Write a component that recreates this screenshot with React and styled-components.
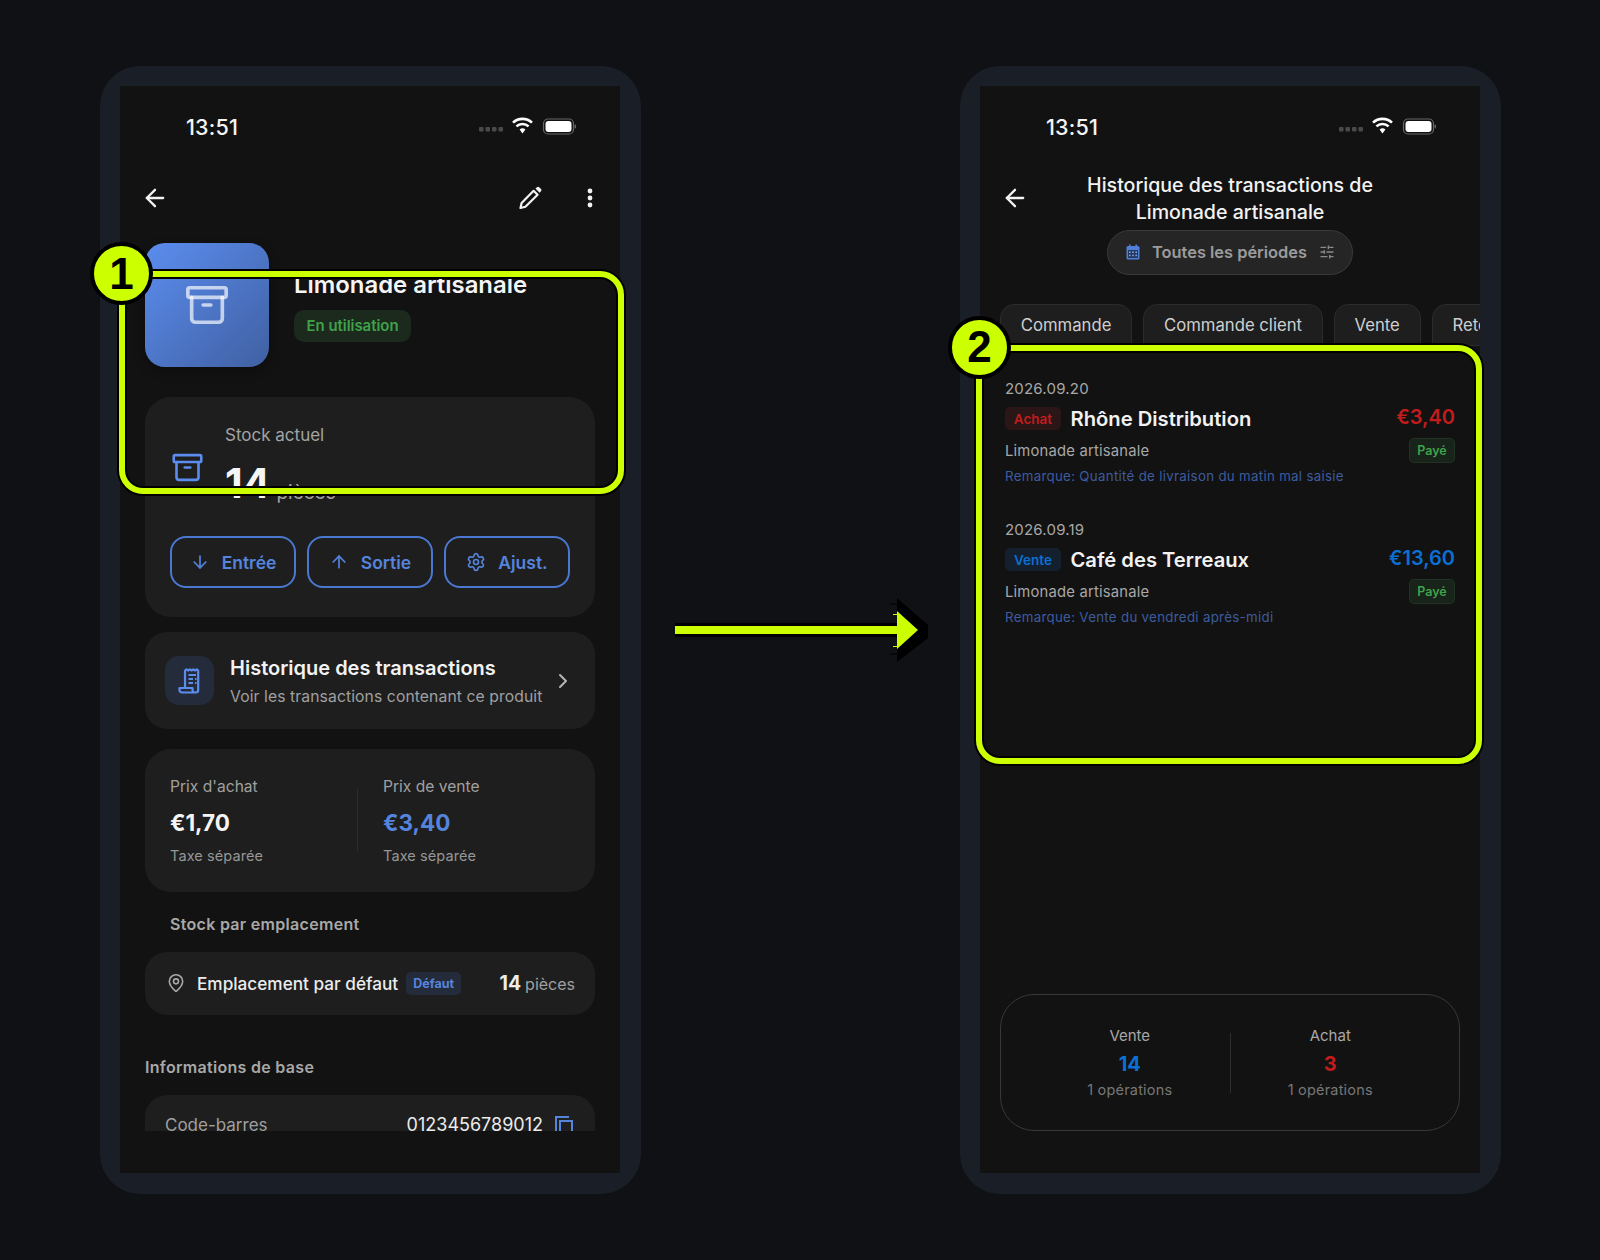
import React from "react";
import styled, { createGlobalStyle } from "styled-components";
import { ArrowLeft, ArrowDown, ArrowUp, Archive, Settings, ChevronRight, MapPin, SlidersHorizontal } from "lucide-react";

const Global = createGlobalStyle`
  html, body { margin: 0; padding: 0; background: #0f1115; }
  * { box-sizing: border-box; }
  body { font-family: Inter, "Noto Sans", sans-serif; -webkit-font-smoothing: antialiased; }
`;

const Page = styled.div`
  position: relative;
  width: 1600px;
  height: 1260px;
  overflow: hidden;
  padding: 66px 99px 66px 100px;
  display: flex;
  justify-content: space-between;
  background: #0f1115;
`;
const Frame = styled.div`
  width: 541px;
  height: 1128px;
  padding: 20px 21px 21px 20px;
  border-radius: 40px;
  background: #1a1e27;
`;
const Screen = styled.div`
  height: 1087px;
  background: #121212;
  display: flex;
  flex-direction: column;
  overflow: hidden;
  color: #f2f2f2;
`;
const StatusBar = styled.div`
  height: 80px;
  flex: none;
  display: flex;
  align-items: center;
  padding: 0 44px 0 66px;
`;
const Time = styled.div`
  padding-top: 1px;
  font-size: 21.5px;
  font-weight: 500;
  letter-spacing: 0.2px;
  color: #f4f4f4;
  flex: 1;
`;
const StatusIcons = styled.svg`
  width: 97px;
  height: 24px;
  display: block;
`;
const NavBar = styled.div`
  height: 64px;
  flex: none;
  display: flex;
  align-items: center;
  padding: 0 26px 0 21px;
  gap: 43px;
`;
const NavSpacer = styled.div`flex: 1;`;
const Scroll = styled.div`
  height: 901px;
  flex: none;
  overflow: hidden;
  padding: 13px 25px 0;
`;
const Hero = styled.div`
  display: flex;
  gap: 25px;
`;
const ProductImage = styled.div`
  width: 124px;
  height: 124px;
  border-radius: 20px;
  background: linear-gradient(135deg, #5b8def 0%, #4060a2 100%);
  display: flex;
  align-items: center;
  justify-content: center;
  color: rgba(255, 255, 255, 0.68);
  box-shadow: 0 4px 12px rgba(0, 0, 0, 0.3);
`;
const HeroText = styled.div`
  padding-top: 27px;
  display: flex;
  flex-direction: column;
  align-items: flex-start;
  gap: 11px;
`;
const ProductName = styled.div`
  font-size: 23.9px;
  line-height: 29px;
  font-weight: 600;
  color: #f5f5f5;
`;
const StateBadge = styled.div`
  height: 32px;
  padding: 0 12.5px;
  display: flex;
  align-items: center;
  border-radius: 10px;
  background: #1c2a1e;
  color: #3fa34a;
  font-size: 14.9px;
  font-weight: 600;
`;
const Card = styled.div`
  background: #1e1e1e;
  border-radius: ${(p) => p.$radius || 26}px;
  margin-top: ${(p) => p.$top || 0}px;
`;
const StockCard = styled(Card)`
  padding: 26px 25px 29px;
`;
const StockRow = styled.div`
  display: flex;
  align-items: center;
  gap: 21px;
`;
const BoxIcon = styled.div`
  width: 34px;
  padding-top: 5px;
  color: #5b8def;
  display: flex;
  justify-content: center;
`;
const StockLabel = styled.div`
  font-size: 17px;
  line-height: 24px;
  color: #a3a3a3;
`;
const StockValue = styled.div`
  margin-top: 12px;
  height: 48px;
  line-height: 48px;
  white-space: nowrap;
`;
const BigNumber = styled.span`
  font-size: 41px;
  font-weight: 700;
  color: #f5f5f5;
`;
const Unit = styled.span`
  margin-left: 6px;
  font-size: 19px;
  vertical-align: -1px;
  color: #a3a3a3;
`;
const Actions = styled.div`
  margin-top: 29px;
  display: flex;
  gap: 11px;
`;
const ActionButton = styled.div`
  flex: 1;
  height: 52px;
  border: 2px solid #4a78d0;
  border-radius: 16px;
  display: flex;
  align-items: center;
  justify-content: center;
  gap: 12px;
  color: #5584dd;
  font-size: 17.5px;
  font-weight: 600;
`;
const HistoryCard = styled(Card)`
  height: 97px;
  padding: 0 20px;
  display: flex;
  align-items: center;
  gap: 16px;
`;
const HistoryIcon = styled.div`
  width: 49px;
  height: 49px;
  flex: none;
  border-radius: 14px;
  background: #242b3a;
  display: flex;
  align-items: center;
  justify-content: center;
`;
const HistoryText = styled.div`
  flex: 1;
`;
const HistoryTitle = styled.div`
  font-size: 20px;
  line-height: 28px;
  font-weight: 600;
  color: #f2f2f2;
`;
const HistorySub = styled.div`
  font-size: 15.7px;
  line-height: 22px;
  margin-top: 4px;
  letter-spacing: 0.1px;
  color: #a0a0a0;
  white-space: nowrap;
`;
const Chevron = styled.div`
  color: #b5b5b5;
  display: flex;
  margin: 1px 0 0 -10px;
`;
const PriceCard = styled(Card)`
  height: 143px;
  padding: 26px 25px 0;
  display: flex;
`;
const PriceCol = styled.div`
  flex: 1;
`;
const PriceDivider = styled.div`
  width: 1px;
  height: 62px;
  margin: 14px 25px 0 0;
  background: #2d2d2d;
`;
const PriceLabel = styled.div`
  font-size: 15.6px;
  line-height: 24px;
  color: #a0a0a0;
`;
const PriceValue = styled.div`
  margin-top: 9px;
  font-size: 22.5px;
  line-height: 30px;
  font-weight: 700;
  color: ${(p) => p.$color || "#f5f5f5"};
`;
const PriceNote = styled.div`
  margin-top: 7px;
  font-size: 14.5px;
  line-height: 22px;
  letter-spacing: 0.1px;
  color: #969696;
`;
const SectionTitle = styled.div`
  margin-top: ${(p) => p.$top}px;
  padding-left: ${(p) => p.$indent || 0}px;
  font-size: 16px;
  line-height: 24px;
  font-weight: 600;
  letter-spacing: 0.3px;
  color: #a8a8a8;
`;
const LocationCard = styled(Card)`
  height: 63px;
  padding: 0 20px 1px 21px;
  display: flex;
  align-items: center;
`;
const Pin = styled.div`
  color: #a8a8a8;
  display: flex;
  margin-right: 11px;
`;
const LocationName = styled.div`
  font-size: 17.2px;
  font-weight: 500;
  color: #ececec;
  white-space: nowrap;
`;
const DefaultBadge = styled.div`
  margin-left: 8px;
  height: 23px;
  padding: 0 7px;
  display: flex;
  align-items: center;
  border-radius: 5px;
  background: #242b3a;
  color: #5584dd;
  font-size: 12.5px;
  font-weight: 700;
`;
const LocationQty = styled.div`
  margin-left: auto;
  display: flex;
  align-items: baseline;
  gap: 4px;
`;
const QtyNumber = styled.span`
  font-size: 19.5px;
  font-weight: 700;
  color: #ececec;
`;
const QtyUnit = styled.span`
  font-size: 16px;
  color: #a0a0a0;
`;
const InfoCard = styled(Card)`
  height: 60px;
  padding: 18px 22px 0 20px;
  display: flex;
  align-items: flex-start;
  justify-content: space-between;
`;
const InfoLabel = styled.div`
  font-size: 17px;
  line-height: 24px;
  color: #a0a0a0;
`;
const InfoValue = styled.div`
  display: flex;
  align-items: center;
  gap: 12px;
  font-size: 18px;
  line-height: 24px;
  color: #ececec;
`;

const DetailNav = styled.div`
  flex: none;
  height: 64px;
  display: grid;
  grid-template-columns: 60px 1fr 60px;
  align-items: center;
`;
const BackSlot = styled.div`
  padding-left: 21px;
  display: flex;
`;
const DetailTitle = styled.div`
  padding-top: 2px;
  font-size: 19.6px;
  line-height: 27.5px;
  font-weight: 500;
  text-align: center;
  color: #f2f2f2;
`;
const FilterPill = styled.div`
  flex: none;
  align-self: center;
  height: 45px;
  padding: 0 17px 1px 18px;
  display: flex;
  align-items: center;
  gap: 12px;
  border: 1px solid #3a3a3a;
  border-radius: 23px;
  background: #252525;
  color: #9c9c9c;
  font-size: 16.4px;
  font-weight: 600;
`;
const Tabs = styled.div`
  flex: none;
  margin-top: 29px;
  padding-left: 20px;
  display: flex;
  gap: 11px;
  overflow: hidden;
`;
const Tab = styled.div`
  flex: none;
  height: 42px;
  padding: 0 19.8px 1px;
  display: flex;
  align-items: center;
  border: 1px solid #2b2b2b;
  border-radius: 14px 14px 0 0;
  background: #1e1e1e;
  color: #cfcfcf;
  font-size: 16.7px;
`;
const TxList = styled.div`
  flex: none;
  margin-top: 33px;
  padding: 0 25px;
  display: flex;
  flex-direction: column;
  gap: 33px;
`;
const Tx = styled.div`
  height: 108px;
`;
const TxDate = styled.div`
  font-size: 15px;
  line-height: 20px;
  letter-spacing: 0.2px;
  color: #a8a8a8;
`;
const TxTop = styled.div`
  margin-top: 8px;
  height: 23px;
  display: flex;
  align-items: center;
  justify-content: space-between;
`;
const TxParty = styled.div`
  display: flex;
  align-items: center;
  gap: 9.5px;
`;
const TypeBadge = styled.div`
  width: 56px;
  height: 23px;
  display: flex;
  align-items: center;
  justify-content: center;
  border-radius: 5px;
  background: ${(p) => p.$bg};
  color: ${(p) => p.$color};
  font-size: 13.5px;
  font-weight: 600;
`;
const TxName = styled.div`
  font-size: 20.2px;
  font-weight: 600;
  color: #f2f2f2;
`;
const TxAmount = styled.div`
  font-size: 20px;
  font-weight: 600;
  margin-top: -4px;
  color: ${(p) => p.$color};
`;
const TxMiddle = styled.div`
  margin-top: 8px;
  height: 24px;
  display: flex;
  align-items: center;
  justify-content: space-between;
`;
const TxProduct = styled.div`
  padding-top: 2px;
  font-size: 14.8px;
  letter-spacing: 0.2px;
  color: #a8a8a8;
`;
const PaidBadge = styled.div`
  height: 25px;
  width: 46px;
  display: flex;
  align-items: center;
  justify-content: center;
  border: 1px solid #223325;
  border-radius: 5px;
  background: #18231a;
  color: #3fa34a;
  font-size: 12.5px;
  font-weight: 600;
`;
const TxNote = styled.div`
  margin-top: 4px;
  font-size: 13.3px;
  line-height: 20px;
  letter-spacing: 0.3px;
  color: #3d5c9f;
`;
const Totals = styled.div`
  flex: none;
  margin: auto 20px 42px;
  padding: 0 29px;
  height: 137px;
  border: 1px solid #383838;
  border-radius: 34px;
  display: flex;
  align-items: center;
`;
const TotalCol = styled.div`
  flex: 1;
  text-align: center;
`;
const TotalDivider = styled.div`
  width: 1px;
  height: 60px;
  background: #2e2e2e;
`;
const TotalLabel = styled.div`
  font-size: 15px;
  line-height: 22px;
  color: #a8a8a8;
`;
const TotalValue = styled.div`
  margin-top: 4px;
  font-size: 20px;
  line-height: 26px;
  font-weight: 700;
  color: ${(p) => p.$color};
`;
const TotalNote = styled.div`
  margin-top: 2px;
  font-size: 14.5px;
  line-height: 22px;
  letter-spacing: 0.2px;
  color: #777;
`;

const Highlight = styled.div`
  position: absolute;
  left: ${(p) => p.$x}px;
  top: ${(p) => p.$y}px;
  width: ${(p) => p.$w}px;
  height: ${(p) => p.$h}px;
  border: 6px solid #ccff00;
  border-radius: 24px;
  box-shadow: 0 0 0 2px #000, inset 0 0 0 2px #000;
  pointer-events: none;
`;
const StepDot = styled.div`
  position: absolute;
  left: ${(p) => p.$x}px;
  top: ${(p) => p.$y}px;
  width: 63px;
  height: 63px;
  border-radius: 50%;
  border: 4px solid #000;
  background: #ccff00;
  color: #000;
  display: flex;
  align-items: center;
  justify-content: center;
  font-family: "Liberation Sans", Arial, sans-serif;
  font-size: 44px;
  font-weight: 700;
`;
const FlowArrow = styled.svg`
  position: absolute;
  left: 670px;
  top: 590px;
  width: 265px;
  height: 80px;
`;

const StatusGlyphs = () => (
  <StatusIcons viewBox="0 0 97 24">
    <g fill="#4a4a4a">
      <rect x="0" y="13" width="4.5" height="4.5" rx="1" />
      <rect x="6.5" y="13" width="4.5" height="4.5" rx="1" />
      <rect x="13" y="13" width="4.5" height="4.5" rx="1" />
      <rect x="19.5" y="13" width="4.5" height="4.5" rx="1" />
    </g>
    <g fill="none" stroke="#fff" strokeWidth="2.6">
      <path d="M34 8.6a14 14 0 0 1 19 0" />
      <path d="M37.4 12.4a9 9 0 0 1 12.2 0" />
    </g>
    <path d="M40.6 15.6a4.4 4.4 0 0 1 5.8 0L43.5 19.4z" fill="#fff" />
    <rect x="64.5" y="5" width="30" height="15" rx="4.5" fill="none" stroke="#666" strokeWidth="1.2" />
    <rect x="66.5" y="7" width="26" height="11" rx="3" fill="#fff" />
    <rect x="95.6" y="10.5" width="1.4" height="4" rx="0.7" fill="#666" />
  </StatusIcons>
);

const PencilIcon = () => (
  <svg width="26" height="26" viewBox="0 0 26 26" fill="none">
    <path d="M3.5 23 L4.6 18 L16.6 5.8 L20.6 9.8 L8.4 21.8 Z" stroke="#f2f2f2" strokeWidth="2.2" strokeLinejoin="round" />
    <path d="M18.4 3.6 L20 2.2 a1.6 1.6 0 0 1 2.2 0 L24 4 a1.6 1.6 0 0 1 0 2.2 L22.6 7.8 Z" fill="#f2f2f2" />
  </svg>
);

const MoreIcon = () => (
  <svg width="8" height="24" viewBox="0 0 8 24">
    <circle cx="4" cy="5" r="2.4" fill="#f2f2f2" />
    <circle cx="4" cy="12" r="2.4" fill="#f2f2f2" />
    <circle cx="4" cy="19" r="2.4" fill="#f2f2f2" />
  </svg>
);

const ReceiptIcon = () => (
  <svg width="26" height="28" viewBox="0 0 26 28" fill="none" stroke="#5b8def" strokeWidth="2.2">
    <path d="M8 21 V3.5 l1.5-1.2 1.7 1.2 1.7-1.2 1.7 1.2 1.7-1.2 1.7 1.2 1.7-1.2 1.5 1.2 V23 a2.5 2.5 0 0 1-2.5 2.5 H5 A2.5 2.5 0 0 1 2.5 23 V21 H15.5 V23 a2.5 2.5 0 0 0 2.5 2.5" strokeLinejoin="round" />
    <path d="M11.5 8 H19 M11.5 12 H16 M18 12 H19.5 M11.5 16 H16 M18 16 H19.5" />
  </svg>
);

const CopyIcon = () => (
  <svg width="18" height="18" viewBox="0 0 18 18" fill="none" stroke="#5584dd" strokeWidth="2" style={{ display: "block" }}>
    <path d="M1 17 V1 H14" />
    <rect x="5" y="5" width="12" height="14" />
  </svg>
);

const CalendarIcon = () => (
  <svg width="14" height="16" viewBox="0 0 14 16">
    <rect x="0.5" y="2" width="13" height="13.5" rx="1.6" fill="#4f7fd8" />
    <rect x="3" y="0.5" width="1.6" height="3" fill="#4f7fd8" />
    <rect x="9.4" y="0.5" width="1.6" height="3" fill="#4f7fd8" />
    <rect x="2" y="6" width="10" height="8" fill="#26375c" />
    <g fill="#7ea4ee">
      <rect x="3" y="7.4" width="1.6" height="1.6" />
      <rect x="6.2" y="7.4" width="1.6" height="1.6" />
      <rect x="9.4" y="7.4" width="1.6" height="1.6" />
      <rect x="3" y="10.6" width="1.6" height="1.6" />
      <rect x="6.2" y="10.6" width="1.6" height="1.6" />
      <rect x="9.4" y="10.6" width="1.6" height="1.6" />
    </g>
  </svg>
);

const ProductScreen = () => (
  <Screen>
    <StatusBar>
      <Time>13:51</Time>
      <StatusGlyphs />
    </StatusBar>
    <NavBar>
      <ArrowLeft size={28} strokeWidth={2} color="#f2f2f2" />
      <NavSpacer />
      <PencilIcon />
      <MoreIcon />
    </NavBar>
    <Scroll>
      <Hero>
        <ProductImage>
          <Archive size={46} strokeWidth={1.9} />
        </ProductImage>
        <HeroText>
          <ProductName>Limonade artisanale</ProductName>
          <StateBadge>En utilisation</StateBadge>
        </HeroText>
      </Hero>
      <StockCard $top={30}>
        <StockRow>
          <BoxIcon>
            <Archive size={33} strokeWidth={1.9} />
          </BoxIcon>
          <div>
            <StockLabel>Stock actuel</StockLabel>
            <StockValue>
              <BigNumber>14</BigNumber>
              <Unit>pièces</Unit>
            </StockValue>
          </div>
        </StockRow>
        <Actions>
          <ActionButton><ArrowDown size={20} />Entrée</ActionButton>
          <ActionButton><ArrowUp size={20} />Sortie</ActionButton>
          <ActionButton><Settings size={20} />Ajust.</ActionButton>
        </Actions>
      </StockCard>
      <HistoryCard $top={15} $radius={22}>
        <HistoryIcon><ReceiptIcon /></HistoryIcon>
        <HistoryText>
          <HistoryTitle>Historique des transactions</HistoryTitle>
          <HistorySub>Voir les transactions contenant ce produit</HistorySub>
        </HistoryText>
        <Chevron><ChevronRight size={24} /></Chevron>
      </HistoryCard>
      <PriceCard $top={20}>
        <PriceCol>
          <PriceLabel>Prix d'achat</PriceLabel>
          <PriceValue>€1,70</PriceValue>
          <PriceNote>Taxe séparée</PriceNote>
        </PriceCol>
        <PriceDivider />
        <PriceCol>
          <PriceLabel>Prix de vente</PriceLabel>
          <PriceValue $color="#5584dd">€3,40</PriceValue>
          <PriceNote>Taxe séparée</PriceNote>
        </PriceCol>
      </PriceCard>
      <SectionTitle $top={20} $indent={25}>Stock par emplacement</SectionTitle>
      <LocationCard $top={16} $radius={22}>
        <Pin><MapPin size={20} strokeWidth={1.9} /></Pin>
        <LocationName>Emplacement par défaut</LocationName>
        <DefaultBadge>Défaut</DefaultBadge>
        <LocationQty>
          <QtyNumber>14</QtyNumber>
          <QtyUnit>pièces</QtyUnit>
        </LocationQty>
      </LocationCard>
      <SectionTitle $top={40}>Informations de base</SectionTitle>
      <InfoCard $top={16} $radius={22}>
        <InfoLabel>Code-barres</InfoLabel>
        <InfoValue>0123456789012<CopyIcon /></InfoValue>
      </InfoCard>
    </Scroll>
  </Screen>
);

const transactions = [
  {
    date: "2026.09.20", type: "Achat", badgeBg: "#2a1616", color: "#c21c1c", name: "Rhône Distribution",
    amount: "€3,40", note: "Remarque: Quantité de livraison du matin mal saisie",
  },
  {
    date: "2026.09.19", type: "Vente", badgeBg: "#14202e", color: "#0b6fd4", name: "Café des Terreaux",
    amount: "€13,60", note: "Remarque: Vente du vendredi après-midi",
  },
];

const HistoryScreen = () => (
  <Screen>
    <StatusBar>
      <Time>13:51</Time>
      <StatusGlyphs />
    </StatusBar>
    <DetailNav>
      <BackSlot><ArrowLeft size={28} strokeWidth={2} color="#f2f2f2" /></BackSlot>
      <DetailTitle>Historique des transactions de<br />Limonade artisanale</DetailTitle>
    </DetailNav>
    <FilterPill>
      <CalendarIcon />
      Toutes les périodes
      <SlidersHorizontal size={16} color="#8a8a8a" />
    </FilterPill>
    <Tabs>
      <Tab>Commande</Tab>
      <Tab>Commande client</Tab>
      <Tab>Vente</Tab>
      <Tab>Retour</Tab>
    </Tabs>
    <TxList>
      {transactions.map((t) => (
        <Tx key={t.date}>
          <TxDate>{t.date}</TxDate>
          <TxTop>
            <TxParty>
              <TypeBadge $bg={t.badgeBg} $color={t.color}>{t.type}</TypeBadge>
              <TxName>{t.name}</TxName>
            </TxParty>
            <TxAmount $color={t.color}>{t.amount}</TxAmount>
          </TxTop>
          <TxMiddle>
            <TxProduct>Limonade artisanale</TxProduct>
            <PaidBadge>Payé</PaidBadge>
          </TxMiddle>
          <TxNote>{t.note}</TxNote>
        </Tx>
      ))}
    </TxList>
    <Totals>
      <TotalCol>
        <TotalLabel>Vente</TotalLabel>
        <TotalValue $color="#0b6fd4">14</TotalValue>
        <TotalNote>1 opérations</TotalNote>
      </TotalCol>
      <TotalDivider />
      <TotalCol>
        <TotalLabel>Achat</TotalLabel>
        <TotalValue $color="#c21c1c">3</TotalValue>
        <TotalNote>1 opérations</TotalNote>
      </TotalCol>
    </Totals>
  </Screen>
);

export default function App() {
  return (
    <Page>
      <Global />
      <Frame><ProductScreen /></Frame>
      <Frame><HistoryScreen /></Frame>
      <Highlight $x={118.5} $y={270.5} $w={505.5} $h={223.5} />
      <Highlight $x={976} $y={345} $w={506} $h={419} />
      <StepDot $x={90} $y={242}>1</StepDot>
      <StepDot $x={948} $y={315.5}>2</StepDot>
      <FlowArrow viewBox="670 590 265 80">
        <path d="M675 623H897V598L928 625V638L897 662V637H675Z" fill="#000" />
        <path d="M890 604H897M890 654H897" stroke="#000" strokeWidth="1" />
        <path d="M675 626H897V611L918 630L897 649V634H675Z" fill="#ccff00" />
        <path d="M893 614.5H897M893 646.5H897" stroke="#ccff00" strokeWidth="1" />
      </FlowArrow>
    </Page>
  );
}
